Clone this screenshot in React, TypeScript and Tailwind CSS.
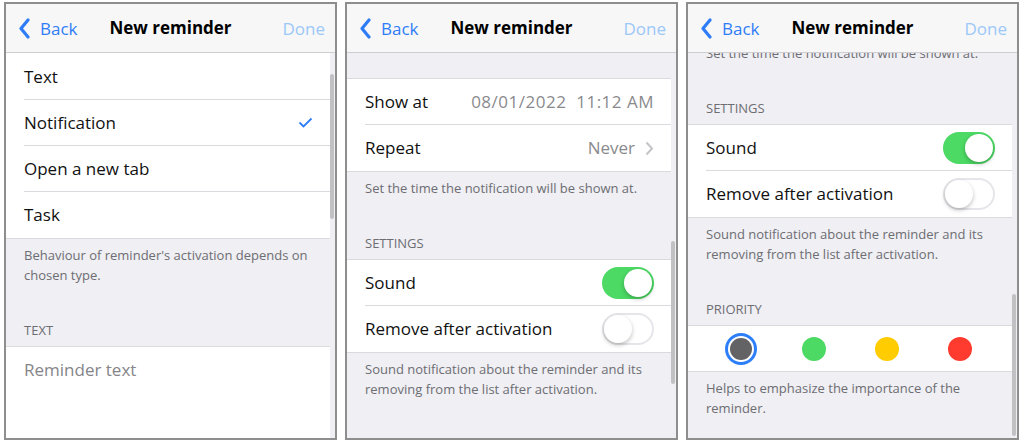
import React from "react";

const FONT = "font-['Open_Sans','Noto_Sans',sans-serif]";

function Header() {
  return (
    <div className="flex items-center h-[49px] shrink-0 bg-[#f7f7f8] border-b border-[#cdcdd2] px-[10px] relative">
      <div className="flex items-center gap-[10px] text-[#2f7df6]">
        <svg width="12" height="21" viewBox="0 0 12 21" className="ml-[2px]">
          <path d="M10 2 L3 10.5 L10 19" fill="none" stroke="#2f7df6" strokeWidth="3.2" strokeLinecap="round" strokeLinejoin="round" />
        </svg>
        <span className="text-[17px] leading-none">Back</span>
      </div>
      <div className="absolute inset-x-0 text-center pointer-events-none">
        <span className="text-[17px] font-bold text-black leading-none">New reminder</span>
      </div>
      <span className="ml-auto text-[17px] text-[#9cc8f8] leading-none">Done</span>
    </div>
  );
}

function Row({ children, last }: { children: React.ReactNode; last?: boolean }) {
  return (
    <div className="pl-[18px] h-[46px]">
      <div className={`flex items-center h-full pr-[17px] text-[17px] text-[#111] ${last ? "" : "border-b border-[#d9d9de]"}`}>
        {children}
      </div>
    </div>
  );
}

function Group({ children, top = true }: { children: React.ReactNode; top?: boolean }) {
  return (
    <div className={`bg-white mr-[5px] border-b border-[#d9d9de] ${top ? "border-t" : ""}`}>{children}</div>
  );
}

function Footer({ children }: { children: React.ReactNode }) {
  return (
    <div className="pl-[18px] pr-[16px] pt-[6px] pb-[35px] text-[13px] leading-[20px] text-[#6d6d72]">{children}</div>
  );
}

function SectionTitle({ children }: { children: React.ReactNode }) {
  return <div className="pl-[18px] pb-[6px] text-[13px] leading-[20px] text-[#6d6d72] uppercase">{children}</div>;
}

function Toggle({ on }: { on: boolean }) {
  return (
    <div
      className={`ml-auto w-[52px] h-[32px] rounded-full flex items-center ${
        on ? "bg-[#4cd964] justify-end p-[2px]" : "bg-white border-2 border-[#e6e6ea] justify-start"
      }`}
    >
      <div className="w-[28px] h-[28px] rounded-full bg-white shadow-[0_2px_4px_rgba(0,0,0,0.25)]" />
    </div>
  );
}

function Scrollbar({ top, height }: { top: number; height: number }) {
  return (
    <div
      className="absolute right-[1px] w-[4px] rounded-full bg-[#c1c1c4]"
      style={{ top, height }}
    />
  );
}

function Panel({ children }: { children: React.ReactNode }) {
  return (
    <div className="w-[333px] h-[438px] border-2 border-[#8e8e8e] flex flex-col overflow-hidden bg-[#efeff4]">
      <Header />
      {children}
    </div>
  );
}

function TimeAndSettings() {
  return (
    <>
      <div className="h-[25px]" />
      <Group>
        <Row>
          <span>Show at</span>
          <span className="ml-auto text-[#8a8a8e] tracking-[0.5px]">08/01/2022&nbsp;&nbsp;11:12 AM</span>
        </Row>
        <Row last>
          <span>Repeat</span>
          <span className="ml-auto text-[#8a8a8e]">Never</span>
          <svg width="9" height="15" viewBox="0 0 9 15" className="ml-[10px]">
            <path d="M1.5 1.5 L7 7.5 L1.5 13.5" fill="none" stroke="#c4c4c8" strokeWidth="2" />
          </svg>
        </Row>
      </Group>
      <Footer>Set the time the notification will be shown at.</Footer>
      <SectionTitle>Settings</SectionTitle>
      <Group>
        <Row>
          <span>Sound</span>
          <Toggle on />
        </Row>
        <Row last>
          <span>Remove after activation</span>
          <Toggle on={false} />
        </Row>
      </Group>
      <Footer>Sound notification about the reminder and its removing from the list after activation.</Footer>
    </>
  );
}

const priorities = ["#636366", "#4cd964", "#ffcc00", "#ff3b30"];

export default function App() {
  return (
    <div className={`w-[1024px] h-[445px] bg-white flex gap-[8px] pl-[4px] pt-[2px] ${FONT}`}>
      {/* Type */}
      <Panel>
        <div className="relative flex-1 overflow-hidden">
          <div className="h-[1px] bg-white mr-[5px]" />
          <Group top={false}>
            <Row>Text</Row>
            <Row>
              <span>Notification</span>
              <svg width="15" height="11" viewBox="0 0 15 11" className="ml-auto">
                <path d="M1.5 5.5 L5.5 9.5 L13.5 1.5" fill="none" stroke="#2f7df6" strokeWidth="1.8" />
              </svg>
            </Row>
            <Row>Open a new tab</Row>
            <Row last>Task</Row>
          </Group>
          <Footer>Behaviour of reminder's activation depends on chosen type.</Footer>
          <SectionTitle>Text</SectionTitle>
          <div className="bg-white mr-[5px] border-t border-[#d9d9de] h-[120px] pl-[18px] pt-[11px] text-[17px] leading-[24px] text-[#858589]">
            Reminder text
          </div>
          <Scrollbar top={21} height={145} />
        </div>
      </Panel>

      {/* Time + settings */}
      <Panel>
        <div className="relative flex-1 overflow-hidden">
          <TimeAndSettings />
          <Scrollbar top={188} height={143} />
        </div>
      </Panel>

      {/* Scrolled to priority */}
      <Panel>
        <div className="relative flex-1 overflow-hidden">
          <div className="-mt-[135px]">
            <TimeAndSettings />
            <SectionTitle>Priority</SectionTitle>
            <Group>
              <div className="grid grid-cols-4 h-[45px] px-[16px] items-center justify-items-center">
                {priorities.map((c, i) =>
                  i === 0 ? (
                    <div key={c} className="w-[32px] h-[32px] rounded-full border-[3px] border-[#2d7ff9] bg-white p-[2px]">
                      <div className="w-full h-full rounded-full" style={{ backgroundColor: c }} />
                    </div>
                  ) : (
                    <div key={c} className="w-[24px] h-[24px] rounded-full" style={{ backgroundColor: c }} />
                  )
                )}
              </div>
            </Group>
            <Footer>Helps to emphasize the importance of the reminder.</Footer>
          </div>
          <Scrollbar top={241} height={142} />
        </div>
      </Panel>
    </div>
  );
}
